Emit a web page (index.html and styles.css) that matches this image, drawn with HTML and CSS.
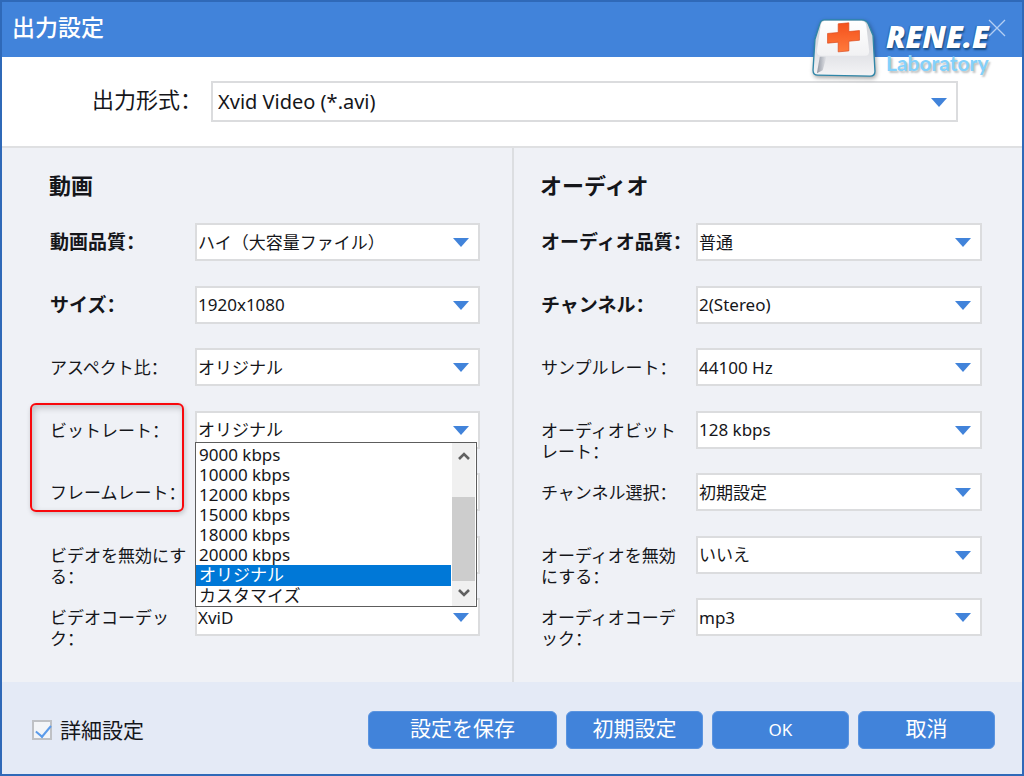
FILE: index.html
```html
<!DOCTYPE html>
<html lang="ja">
<head>
<meta charset="utf-8">
<meta name="viewport" content="width=device-width, initial-scale=1">
<title>出力設定</title>
<link rel="stylesheet" href="styles.css">
</head>
<body>
<main class="dialog">
  <header class="titlebar">
    <h1 class="title">出力設定</h1>
    <button class="close" type="button" aria-label="閉じる">
      <svg width="18" height="18" viewBox="0 0 18 18" fill="none" stroke="#b4cff3" stroke-width="1.3"><path d="M1 1l16 16M17 1L1 17"/></svg>
    </button>
    <div class="brand">
      <svg class="brand-key" width="64" height="60" viewBox="0 0 66 62">
        <defs>
          <linearGradient id="top" x1="0" y1="0" x2="0" y2="1"><stop offset="0" stop-color="#fff"/><stop offset="1" stop-color="#f1f1f3"/></linearGradient>
          <linearGradient id="front" x1="0" y1="0" x2="0" y2="1"><stop offset="0" stop-color="#cfd1d6"/><stop offset=".5" stop-color="#dcdde2"/><stop offset="1" stop-color="#f4f4f6"/></linearGradient>
          <linearGradient id="edge" x1="0" y1="0" x2="1" y2="0"><stop offset="0" stop-color="#8e94a0"/><stop offset="1" stop-color="#8e94a0" stop-opacity="0"/></linearGradient>
          <linearGradient id="cross" x1="0" y1="0" x2="0" y2="1"><stop offset="0" stop-color="#f4511c"/><stop offset="1" stop-color="#ff7a3c"/></linearGradient>
        </defs>
        <path d="M13 2h38q5 0 7 4l5 12 2 37q0 5-5 5L6 59q-5 0-5-5l2-32L8 6q1-4 5-4z" fill="url(#front)" stroke="#2f86a8" stroke-width="1.4"/>
        <path d="M13 3h38q4 0 5 4l3 27q0 5-4 5H10q-5 0-5-5L9 7q1-4 4-4z" fill="url(#top)"/>
        <path d="M8 40h7l-4 14-6 3z" fill="url(#edge)"/>
        <path d="M27 6l11-1v9l11-1v10l-11 1v10l-11 1V25l-11 1V16l11-1z" fill="url(#cross)" stroke="#d9481c" stroke-width=".7"/>
      </svg>
      <span class="brand-text"><span class="brand-name">RENE.E</span><span class="brand-sub">Laboratory</span></span>
    </div>
  </header>

  <section class="format">
    <label class="format-label" for="format">出力形式<span lang="zh-CN">：</span></label>
    <span class="select-box"><select id="format"><option>Xvid Video (*.avi)</option></select></span>
  </section>

  <div class="panels">
    <section class="panel panel-video">
      <h2 class="panel-title">動画</h2>
      <div class="rows">
        <div class="row"><label class="strong" for="vq">動画品質<span lang="zh-CN">：</span></label><span class="select-box"><select id="vq"><option>ハイ（大容量ファイル）</option></select></span></div>
        <div class="row"><label class="strong" for="size">サイズ<span lang="zh-CN">：</span></label><span class="select-box"><select id="size"><option>1920x1080</option></select></span></div>
        <div class="row"><label for="aspect">アスペクト比<span lang="zh-CN">：</span></label><span class="select-box"><select id="aspect"><option>オリジナル</option></select></span></div>
        <div class="row row-open">
          <label for="bitrate">ビットレート<span lang="zh-CN">：</span></label>
          <span class="select-box"><select id="bitrate"><option>オリジナル</option></select></span>
          <div class="popup">
            <ul class="options" role="listbox" aria-label="ビットレート">
              <li role="option">9000 kbps</li>
              <li role="option">10000 kbps</li>
              <li role="option">12000 kbps</li>
              <li role="option">15000 kbps</li>
              <li role="option">18000 kbps</li>
              <li role="option">20000 kbps</li>
              <li role="option" class="selected" aria-selected="true">オリジナル</li>
              <li role="option">カスタマイズ</li>
            </ul>
            <div class="scrollbar">
              <svg width="12" height="10" viewBox="0 0 12 10" fill="none" stroke="#606060" stroke-width="2.6"><path d="M1 8l5-5 5 5"/></svg>
              <span class="thumb"></span>
              <svg width="12" height="10" viewBox="0 0 12 10" fill="none" stroke="#606060" stroke-width="2.6"><path d="M1 2l5 5 5-5"/></svg>
            </div>
          </div>
          <span class="callout"></span>
        </div>
        <div class="row"><label for="fps">フレームレート<span lang="zh-CN">：</span></label><span class="select-box"><select id="fps"></select></span></div>
        <div class="row"><label for="novideo">ビデオを無効にする<span lang="zh-CN">：</span></label><span class="select-box"><select id="novideo"></select></span></div>
        <div class="row"><label for="vcodec">ビデオコーデック<span lang="zh-CN">：</span></label><span class="select-box"><select id="vcodec"><option>XviD</option></select></span></div>
      </div>
    </section>

    <section class="panel panel-audio">
      <h2 class="panel-title">オーディオ</h2>
      <div class="rows">
        <div class="row"><label class="strong" for="aq">オーディオ品質<span lang="zh-CN">：</span></label><span class="select-box"><select id="aq"><option>普通</option></select></span></div>
        <div class="row"><label class="strong" for="channel">チャンネル<span lang="zh-CN">：</span></label><span class="select-box"><select id="channel"><option>2(Stereo)</option></select></span></div>
        <div class="row"><label for="sample">サンプルレート<span lang="zh-CN">：</span></label><span class="select-box"><select id="sample"><option>44100 Hz</option></select></span></div>
        <div class="row"><label for="abitrate">オーディオビットレート<span lang="zh-CN">：</span></label><span class="select-box"><select id="abitrate"><option>128 kbps</option></select></span></div>
        <div class="row"><label for="chsel">チャンネル選択<span lang="zh-CN">：</span></label><span class="select-box"><select id="chsel"><option>初期設定</option></select></span></div>
        <div class="row"><label for="noaudio">オーディオを無効にする<span lang="zh-CN">：</span></label><span class="select-box"><select id="noaudio"><option>いいえ</option></select></span></div>
        <div class="row"><label for="acodec">オーディオコーデック<span lang="zh-CN">：</span></label><span class="select-box"><select id="acodec"><option>mp3</option></select></span></div>
      </div>
    </section>
  </div>

  <footer class="footer">
    <label class="advanced"><input type="checkbox" checked><span>詳細設定</span></label>
    <div class="actions">
      <button class="btn btn-wide" type="button">設定を保存</button>
      <button class="btn" type="button">初期設定</button>
      <button class="btn btn-ok" type="button">OK</button>
      <button class="btn" type="button">取消</button>
    </div>
  </footer>
</main>
</body>
</html>
```

FILE: styles.css
```css
* { box-sizing: border-box; }

body {
  margin: 0;
  font-family: "Noto Sans", "Noto Sans CJK JP", sans-serif;
  font-size: 17px;
  color: #15161a;
}

[lang="zh-CN"] {
  font-family: "Noto Sans CJK SC", sans-serif;
  line-height: 0;
}

.dialog {
  display: flex;
  flex-direction: column;
  min-height: 100vh;
  border: 2px solid #2f69b8;
  background: #eff1f6;
}

.titlebar {
  position: relative;
  display: flex;
  align-items: center;
  justify-content: space-between;
  height: 55px;
  padding: 0 16px 4px 10px;
  background: #4183da;
}

.title {
  margin: 0;
  padding-bottom: 2px;
  font-size: 23px;
  line-height: 32px;
  font-weight: 500;
  color: #fff;
}

.close {
  display: flex;
  padding: 0;
  border: 0;
  background: none;
}

.brand {
  position: absolute;
  top: 16px;
  left: calc(100% - 210px);
  display: flex;
  gap: 10px;
  z-index: 1;
}

.brand-key { filter: drop-shadow(1px 2px 2px rgba(0, 0, 0, .35)); }

.brand-text {
  display: flex;
  flex-direction: column;
  font-family: Lato, sans-serif;
}

.brand-name {
  font-family: "Open Sans", sans-serif;
  font-size: 30px;
  line-height: 38px;
  font-weight: 800;
  font-style: italic;
  color: #fff;
  text-shadow: 1px 2px 2px #174a80, -1px 0 1px #2a68ab;
}

.brand-sub {
  font-size: 21px;
  line-height: 14px;
  font-weight: 700;
  color: #83d1fb;
  text-shadow: 2px 2px 2px rgba(0, 0, 0, .25);
}

.format {
  display: flex;
  align-items: center;
  gap: 9px;
  height: 91px;
  padding: 0 64px 1px 90px;
  border-bottom: 2px solid #dfe0e2;
  background: #fff;
}

.format-label {
  flex: none;
  padding-bottom: 4px;
  font-size: 22px;
  line-height: 32px;
}

.select-box {
  position: relative;
  display: block;
  flex: 1;
}

.select-box::after {
  content: "";
  position: absolute;
  top: 15px;
  right: 11px;
  border: 8px solid transparent;
  border-top: 9px solid #4183da;
  border-bottom: 0;
  pointer-events: none;
}

select {
  display: block;
  width: 100%;
  height: 38px;
  padding: 0 32px 0 1px;
  border: 2px solid #dbdcde;
  border-radius: 0;
  appearance: none;
  background: #fff;
  font: inherit;
  color: inherit;
}

.format select {
  height: 41px;
  padding-left: 5px;
  font-size: 20px;
}

.format .select-box::after { top: 17px; }

.panels {
  flex: 1;
  display: grid;
  grid-template-columns: 1fr 1fr;
}

.panel {
  display: flex;
  flex-direction: column;
  padding: 21px 40px 21px 26px;
}

.panel-video {
  padding-left: 47px;
  padding-right: 32px;
}

.panel-audio { border-left: 2px solid #dcdee1; }

.panel-title {
  margin: 0 0 22px;
  font-size: 22px;
  line-height: 32px;
  font-weight: 700;
}

.rows {
  flex: 1;
  display: grid;
  grid-template-rows: repeat(7, 1fr);
}

.row {
  position: relative;
  display: flex;
  align-items: flex-start;
}

.row label {
  flex: none;
  width: 156px;
  padding: 9px 14px 0 1px;
  line-height: 21px;
}

.panel-video .row label {
  width: 146px;
  padding-right: 8px;
}

.row .strong {
  font-size: 19px;
  font-weight: 700;
  padding-right: 0;
}

.row-open { z-index: 1; }

.popup {
  position: absolute;
  top: 31px;
  left: 146px;
  right: 3px;
  display: flex;
  gap: 1px;
  padding-right: 1px;
  border: 1px solid #5d5d5d;
  background: #fff;
}

.options {
  flex: 1;
  margin: 0;
  padding: 2px 0 0;
  list-style: none;
}

.options li {
  height: 20px;
  padding-left: 3px;
  line-height: 20px;
}

.options .selected {
  height: 21px;
  background: #0078d7;
  color: #fff;
}

.scrollbar {
  display: flex;
  flex-direction: column;
  align-items: center;
  justify-content: space-between;
  width: 23px;
  padding: 8px 0;
  background: #f0f0f0;
}

.thumb {
  width: 100%;
  height: 84px;
  margin-top: 30px;
  background: #cdcdcd;
}

.callout {
  position: absolute;
  top: -8px;
  left: -19px;
  width: 154px;
  height: 109px;
  border: 2px solid #f8080c;
  border-radius: 6px;
  box-shadow: 1px 2px 5px rgba(0, 0, 0, .2), inset 2px 3px 6px rgba(0, 0, 0, .2);
  pointer-events: none;
}

.footer {
  display: flex;
  align-items: center;
  justify-content: space-between;
  height: 92px;
  padding: 3px 27px 0 30px;
  background: #e4eaf6;
}

.advanced {
  display: flex;
  align-items: center;
  gap: 8px;
  font-size: 21px;
  line-height: 32px;
}

.advanced input {
  position: relative;
  width: 20px;
  height: 20px;
  margin: 0;
  border: 2px solid #bfc1c5;
  appearance: none;
  background: #f3f5f8;
}

.advanced input:checked::after {
  content: "";
  position: absolute;
  top: 0;
  left: 5px;
  width: 7px;
  height: 13px;
  border: solid #5b9bea;
  border-width: 0 2px 2px 0;
  transform: rotate(40deg);
}

.actions {
  display: flex;
  gap: 9px;
}

.btn {
  width: 137px;
  height: 38px;
  padding: 0 0 3px;
  border: 1px solid #5a94e0;
  border-radius: 6px;
  background: #4183da;
  font-family: inherit;
  font-size: 21px;
  line-height: 32px;
  color: #fff;
}

.btn-wide { width: 189px; }

.btn-ok {
  padding: 0;
  font-size: 17px;
}
```
